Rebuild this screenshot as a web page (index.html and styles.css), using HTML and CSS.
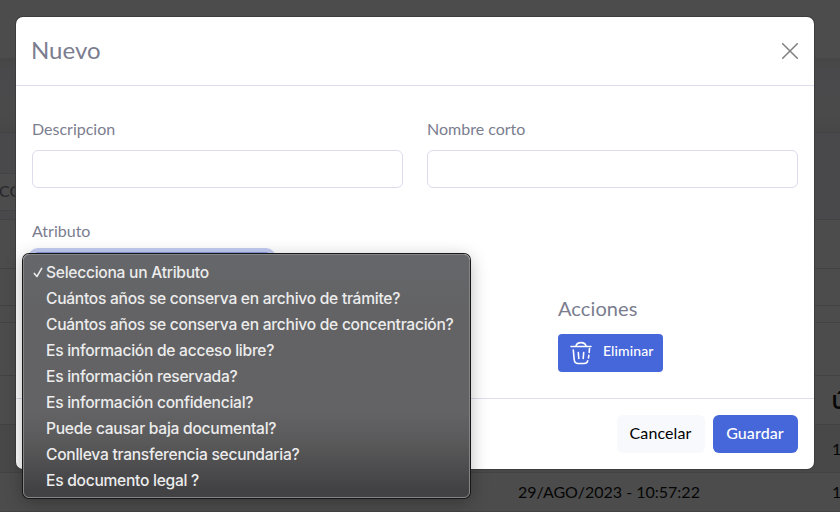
FILE: index.html
```
<!DOCTYPE html>
<html lang="es">
<head>
<meta charset="utf-8">
<title>Nuevo</title>
<link rel="stylesheet" href="styles.css">
</head>
<body>
<div class="page">
  <div class="navbar"></div>
  <div class="hero"></div>
  <div class="filters"><div class="search"><span>CÓDIGO</span></div></div>
  <div class="row h49"></div>
  <div class="row h37"></div>
  <div class="row h17"></div>
  <div class="row h53"></div>
  <div class="row h49 cells head"><span></span><span>ÚLTIMA</span></div>
  <div class="row h48 cells shaded"><span></span><span>10</span></div>
  <div class="row h39 cells"><span>29/AGO/2023 - 10:57:22</span><span>10</span></div>
  <div class="row"></div>
</div>

<div class="modal">
  <header class="modal-header">
    <h1>Nuevo</h1>
    <svg class="close" viewBox="0 0 16 16"><path d="M.7.7l14.6 14.6M15.3.7L.7 15.3"/></svg>
  </header>
  <main class="modal-body">
    <div class="fields">
      <label class="field"><span>Descripcion</span><input type="text"></label>
      <label class="field"><span>Nombre corto</span><input type="text"></label>
    </div>
    <div class="attributes">
      <div class="attribute">
        <span>Atributo</span>
        <div class="select"></div>
      </div>
      <div class="actions">
        <h2>Acciones</h2>
        <button class="btn primary small">
          <svg class="trash" viewBox="0 0 22 24"><path d="M1 5.500h20M6 5C7 .5 15 .5 16 5M3.300 9l.9 9.500c.3 3 1.200 4 3.800 4h6c2.300 0 3.300-.9 3.700-2.700M19.500 7.500l-.3 4M18.800 14.200l-.3 2.800M8.300 11.500l.5 6M13.700 11.500l-.5 6"/></svg>
          <span>Eliminar</span>
        </button>
      </div>
    </div>
  </main>
  <footer class="modal-footer">
    <button class="btn light">Cancelar</button>
    <button class="btn primary">Guardar</button>
  </footer>
</div>

<ul class="menu">
  <li><svg class="check" viewBox="0 0 10 12"><path d="M1 7l2.800 3.400L9 1.500"/></svg>Selecciona un Atributo</li>
  <li>Cuántos años se conserva en archivo de trámite?</li>
  <li>Cuántos años se conserva en archivo de concentración?</li>
  <li>Es información de acceso libre?</li>
  <li>Es información reservada?</li>
  <li>Es información confidencial?</li>
  <li>Puede causar baja documental?</li>
  <li>Conlleva transferencia secundaria?</li>
  <li>Es documento legal ?</li>
</ul>
</body>
</html>
```
FILE: styles.css
```
* { box-sizing: border-box; }
body {
  margin: 0;
  width: 840px;
  height: 512px;
  overflow: hidden;
  position: relative;
  background: #4c4c4c;
  font: 16px/24px Lato, sans-serif;
  color: #7b7d8f;
}
h1, h2 { margin: 0; font-weight: 400; }

/* Dimmed page behind the dialog */
.page { height: 512px; overflow: hidden; color: #060606; }
.navbar { height: 58px; background: #4c4c4c; }
.hero { height: 74px; background: linear-gradient(#464646, #49494b 15%, #4a4a4b 75%, #474748); }
.filters { height: 87px; border-top: 1px solid #434344; background: #49494b; padding-top: 40px; }
.search {
  width: 300px;
  height: 38px;
  margin-left: -20px;
  border: 1px solid #424347;
  background: #4c4c4c;
  color: #27272a;
  display: flex;
  align-items: center;
  padding: 0 0 2px 18px;
}
.row { border-top: 1px solid #424243; background: #4c4c4c; }
.h49 { height: 49px; }
.h37 { height: 37px; }
.h17 { height: 17px; }
.h53 { height: 53px; }
.h48 { height: 48px; }
.h39 { height: 39px; }
.shaded { background: #484848; }
.cells { display: grid; grid-template-columns: 314px 40px; padding-left: 518px; align-items: center; overflow: hidden; }
.cells span:last-child { grid-column: 2; }
.head { font-weight: 900; font-size: 18px; padding-top: 4px; }

/* Dialog */
.modal {
  position: absolute;
  left: 16px;
  top: 17px;
  width: 798px;
  height: 452px;
  background: #fff;
  border-radius: 7px;
  box-shadow: 0 0 0 1px #3d3d3d;
  display: flex;
  flex-direction: column;
}
.modal-header {
  height: 69px;
  border-bottom: 1px solid #dedeee;
  padding: 0 16px 0 15px;
  display: flex;
  justify-content: space-between;
  align-items: center;
}
.modal-header h1 { font-size: 24px; line-height: 32px; padding-bottom: 2px; }
.close { width: 16px; height: 16px; fill: none; stroke: #7f7f7f; stroke-width: 1.5; stroke-linecap: round; }
.modal-body { flex: 1; padding: 31px 16px 0; }
.fields { display: grid; grid-template-columns: 1fr 1fr; gap: 24px; }
.field { display: flex; flex-direction: column; gap: 9px; }
.field input { height: 38px; width: 100%; border: 1px solid #dcdcec; border-radius: 6px; background: #fff; }
.attributes { display: grid; grid-template-columns: 526px 1fr; margin-top: 31px; }
.attribute { width: 240px; }
.select { height: 38px; margin-top: 9px; border: 1px solid #8799e2; border-radius: 6px; box-shadow: 0 0 0 4px #c3cdf2; }
.actions { padding-top: 75px; }
.actions h2 { font-size: 20px; line-height: 28px; margin-bottom: 12px; letter-spacing: .1px; }
.modal-footer {
  height: 71px;
  border-top: 1px solid #dedeee;
  padding-right: 16px;
  display: flex;
  justify-content: flex-end;
  align-items: center;
  gap: 8px;
}
.btn { height: 38px; border: 0; border-radius: 6px; font: 500 16px/24px Lato, sans-serif; padding: 0 1px 2px 0; }
.light { width: 88px; background: #f8f9fd; color: #000; font-weight: 400; letter-spacing: .1px; }
.primary { width: 85px; background: #4667da; color: #fff; letter-spacing: .1px; }
.small {
  width: 105px;
  border-radius: 4px;
  font-size: 14px;
  display: flex;
  align-items: center;
  padding: 0 0 0 12px;
  gap: 11px;
}
.small span { margin-top: -5px; letter-spacing: .1px; }
.trash { width: 22px; height: 24px; fill: none; stroke: #fff; stroke-width: 1.6; stroke-linecap: round; }

/* Native dropdown list */
.menu {
  position: absolute;
  left: 23px;
  top: 254px;
  width: 447px;
  height: 244px;
  margin: 0;
  padding: 5px 0 0 22px;
  list-style: none;
  border: 1px solid #858587;
  border-radius: 6px;
  background: linear-gradient(#65676a, #636365 25%, #636365 65%, #59595a 78%, #424244 97%);
  box-shadow: 0 0 0 1px #171717, 0 4px 18px rgba(0, 0, 0, .3);
  color: #ececec;
  font: 500 15.6px/26px Inter, sans-serif;
  letter-spacing: -.27px;
}
.menu li { height: 26px; position: relative; white-space: nowrap; }
.check { position: absolute; left: -13px; top: 7px; width: 10px; height: 11px; fill: none; stroke: #ececec; stroke-width: 1.7; stroke-linecap: round; stroke-linejoin: round; }
```
